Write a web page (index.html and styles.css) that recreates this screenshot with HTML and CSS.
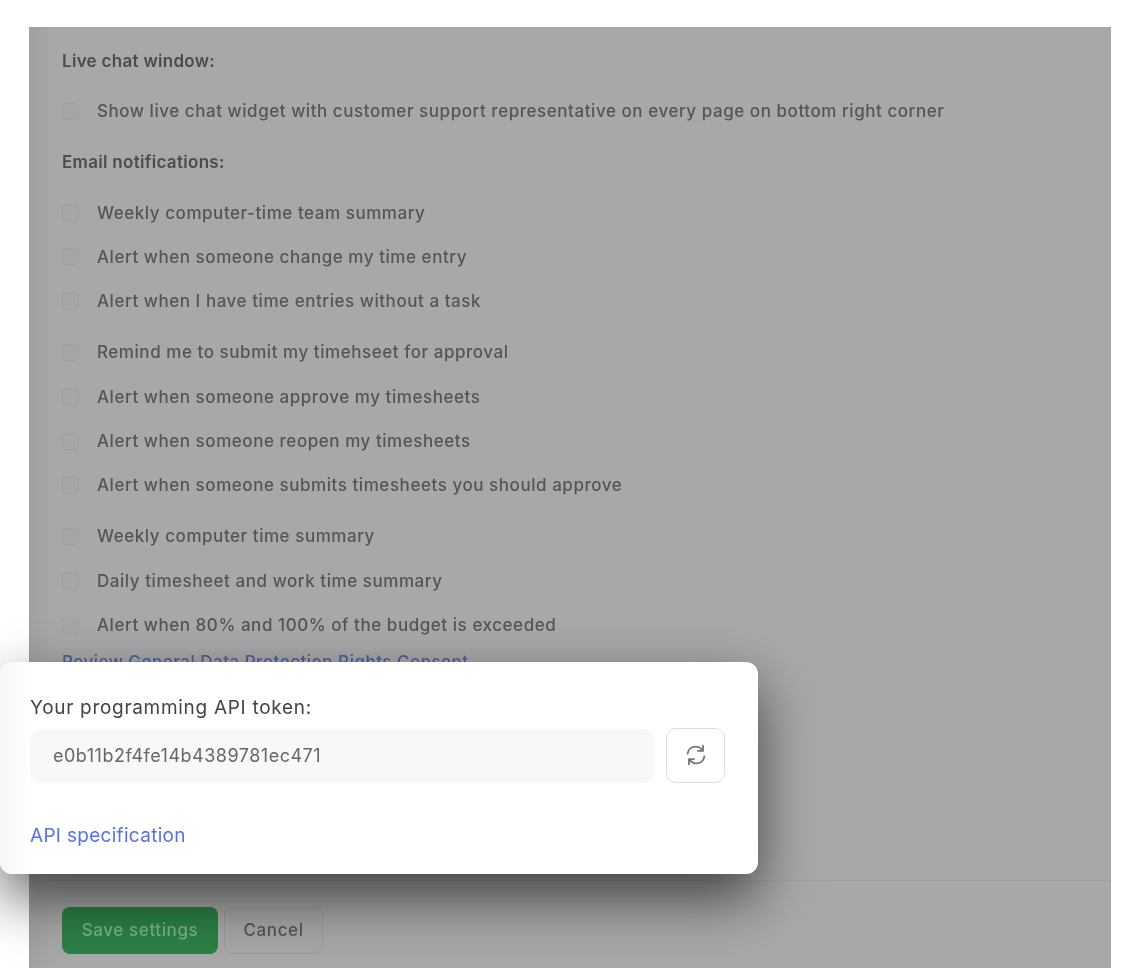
FILE: index.html
```html
<!DOCTYPE html>
<html lang="en">
<head>
    <meta charset="UTF-8">
    <meta name="viewport" content="width=device-width, initial-scale=1.0">
    <title>Settings</title>
    <link rel="stylesheet" href="styles.css">
</head>
<body>
    <div class="panel">
        <div class="settings">
            <h3 class="heading">Live chat window:</h3>
            <label class="row"><span class="check"></span>Show live chat widget with customer support representative on every page on bottom right corner</label>

            <h3 class="heading">Email notifications:</h3>
            <div class="group">
                <label class="row"><span class="check"></span>Weekly computer-time team summary</label>
                <label class="row"><span class="check"></span>Alert when someone change my time entry</label>
                <label class="row"><span class="check"></span>Alert when I have time entries without a task</label>
            </div>
            <div class="group">
                <label class="row"><span class="check"></span>Remind me to submit my timehseet for approval</label>
                <label class="row"><span class="check"></span>Alert when someone approve my timesheets</label>
                <label class="row"><span class="check"></span>Alert when someone reopen my timesheets</label>
                <label class="row"><span class="check"></span>Alert when someone submits timesheets you should approve</label>
            </div>
            <div class="group">
                <label class="row"><span class="check"></span>Weekly computer time summary</label>
                <label class="row"><span class="check"></span>Daily timesheet and work time summary</label>
                <label class="row"><span class="check"></span>Alert when 80% and 100% of the budget is exceeded</label>
            </div>
            <a class="gdpr-link" href="#">Review General Data Protection Rights Consent</a>
        </div>

        <div class="footer">
            <button class="btn btn-save">Save settings</button>
            <button class="btn btn-cancel">Cancel</button>
        </div>
    </div>

    <!-- Highlighted API token box -->
    <div class="token-box">
        <div class="token-label">Your programming API token:</div>
        <div class="token-row">
            <div class="token-field">e0b11b2f4fe14b4389781ec471</div>
            <button class="refresh-btn" aria-label="Regenerate token">
                <svg class="refresh-icon" width="22" height="22" viewBox="0 0 22 22" fill="none" stroke="#77777c" stroke-width="1.9" stroke-linecap="round" stroke-linejoin="round">
                    <path d="M2.6 9.6C3.2 5.4 6.6 2.6 10.8 2.6c2.8 0 5 1.3 6.5 3.8"/>
                    <path d="M18 1.8v5.1h-5"/>
                    <path d="M19.4 12.4c-.6 4.2-4 7-8.2 7-2.8 0-5-1.3-6.5-3.8"/>
                    <path d="M4 20.2v-5.1h5"/>
                </svg>
            </button>
        </div>
        <a class="api-link" href="#">API specification</a>
    </div>
</body>
</html>
```

FILE: styles.css
```css
/* General reset */
* {
    margin: 0;
    padding: 0;
    box-sizing: border-box;
}

html, body {
    height: 968px;
    overflow: hidden;
}

body {
    font-family: 'Inter', 'Liberation Sans', sans-serif;
    background-color: #ffffff;
    position: relative;
}

/* Dimmed settings card behind the token box */
.panel {
    margin: 27px 29px 0;
    height: 941px;
    background: linear-gradient(90deg, #a0a0a0, #a8a8a8 24px);
}

.settings {
    padding: 22px 33px 0;
    filter: blur(0.7px);
}

.heading {
    font-size: 17px;
    font-weight: 600;
    line-height: 24px;
    color: #4c4c4c;
    letter-spacing: 0.3px;
    margin-bottom: 16px;
}

.row + .heading {
    margin-top: 17px;
}

.row {
    display: flex;
    align-items: center;
    gap: 18px;
    height: 44.4px;
    font-size: 17px;
    font-weight: 500;
    color: #555555;
    letter-spacing: 0.55px;
}

.group + .group {
    margin-top: 6.5px;
}

.check {
    width: 17px;
    height: 17px;
    flex: none;
    border: 1px solid #9e9e9e;
    border-radius: 4px;
    background-color: #a6a6a6;
}

.gdpr-link {
    display: block;
    margin-top: 3px;
    font-size: 17px;
    font-weight: 500;
    letter-spacing: 0.5px;
    line-height: 24px;
    color: #4f5f9e;
    text-decoration: none;
}

.footer {
    margin-top: 206px;
    padding: 26px 33px 0;
    border-top: 1px solid #a0a0a0;
    display: flex;
    gap: 6px;
}

.btn {
    height: 47px;
    font-family: inherit;
    font-size: 17px;
    font-weight: 500;
    letter-spacing: 0.6px;
    padding-bottom: 2px;
    border-radius: 8px;
    filter: blur(0.7px);
}

.btn-save {
    width: 156px;
    border: none;
    background-color: #2c7f47;
    color: #74b487;
}

.btn-cancel {
    width: 99px;
    border: 1px solid #9a9a9a;
    background-color: #a6a6a6;
    color: #555555;
}

/* Token box sits over the card */
.token-box {
    position: absolute;
    left: 0;
    top: 662px;
    width: 758px;
    height: 212px;
    padding: 33px 33px 0 30px;
    border-radius: 12px;
    background: linear-gradient(90deg, #f6f6f6, #ffffff 30px);
    box-shadow: 0 24px 56px rgba(0, 0, 0, 0.6);
}

.token-label {
    font-size: 19px;
    line-height: 26px;
    color: #444444;
    letter-spacing: 0.7px;
    filter: blur(0.4px);
}

.token-row {
    display: flex;
    align-items: center;
    gap: 12px;
    margin-top: 7px;
}

.token-field {
    flex: 1;
    height: 54px;
    padding-left: 23px;
    display: flex;
    align-items: center;
    border-radius: 10px;
    background-color: #f8f8f8;
    font-size: 18px;
    color: #666666;
    letter-spacing: 0.5px;
    filter: blur(0.4px);
}

.refresh-btn {
    width: 59px;
    height: 55px;
    display: flex;
    align-items: center;
    justify-content: center;
    border: 1px solid #dddddd;
    border-radius: 10px;
    background-color: #ffffff;
}

.refresh-icon {
    margin-bottom: 2px;
    filter: blur(0.3px);
}

.api-link {
    display: block;
    margin-top: 40px;
    font-size: 19px;
    line-height: 26px;
    letter-spacing: 0.3px;
    color: #5570e8;
    text-decoration: none;
    filter: blur(0.4px);
}
```
